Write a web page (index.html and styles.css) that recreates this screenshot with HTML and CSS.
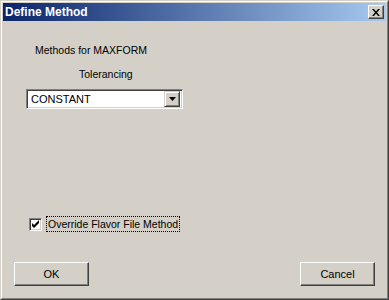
FILE: index.html
```html
<!DOCTYPE html>
<html lang="en">
<head>
<meta charset="UTF-8">
<title>Define Method</title>
<link rel="stylesheet" href="styles.css">
</head>
<body>
<div class="window">
  <div class="window-inner">
    <div class="titlebar">
      <span class="title">Define Method</span>
      <button class="close-btn" type="button">
        <svg width="8" height="7" viewBox="0 0 8 7">
          <path d="M0 0h2l2 2.5L6 0h2L5 3.5 8 7H6L4 4.5 2 7H0l3-3.5z" fill="#000"/>
        </svg>
      </button>
    </div>

    <div class="content">
      <div class="label label-methods">Methods for MAXFORM</div>
      <div class="label label-tol">Tolerancing</div>

      <div class="combo">
        <span class="combo-text">CONSTANT</span>
        <span class="combo-arrow">
          <svg width="7" height="4" viewBox="0 0 7 4"><path d="M0 0h7L3.5 4z" fill="#000"/></svg>
        </span>
      </div>

      <div class="check-row">
        <span class="checkbox">
          <svg width="9" height="9" viewBox="0 0 9 9">
            <path d="M1 3v3l2 2 5-5V0L3 5z" fill="#000"/>
          </svg>
        </span>
        <span class="check-label">Override Flavor File Method</span>
      </div>

      <div class="buttons">
        <button class="btn" type="button">OK</button>
        <button class="btn" type="button">Cancel</button>
      </div>
    </div>
  </div>
</div>
</body>
</html>
```

FILE: styles.css
```css
/* Win2000 style dialog */
body {
  margin: 0;
  padding: 0;
  background-color: #d4d0c8;
  font-family: "Liberation Sans", Arial, sans-serif;
  font-size: 10.5px;
  color: #000;
}
.window {
  width: 389px;
  height: 300px;
  box-sizing: border-box;
  border-top: 1px solid #d4d0c8;
  border-left: 1px solid #d4d0c8;
  border-right: 1px solid #404040;
  border-bottom: 1px solid #404040;
  background-color: #d4d0c8;
}
.window-inner {
  height: 100%;
  box-sizing: border-box;
  border-top: 1px solid #fff;
  border-left: 1px solid #fff;
  border-right: 1px solid #808080;
  border-bottom: 1px solid #808080;
  padding: 1px;
  display: flex;
  flex-direction: column;
}
.titlebar {
  height: 18px;
  display: flex;
  align-items: center;
  justify-content: space-between;
  background: linear-gradient(to right, #0a246a, #a6caf0);
  padding: 0 2px 0 2px;
}
.title {
  color: #fff;
  font-weight: bold;
  font-size: 12px;
  line-height: 18px;
}
.close-btn {
  width: 16px;
  height: 14px;
  padding: 0;
  margin: 0;
  box-sizing: border-box;
  background-color: #d4d0c8;
  border-top: 1px solid #fff;
  border-left: 1px solid #fff;
  border-right: 1px solid #404040;
  border-bottom: 1px solid #404040;
  box-shadow: inset -1px -1px 0 #808080;
  display: flex;
  align-items: center;
  justify-content: center;
}
.close-btn svg {
  display: block;
  margin-right: 1px;
}

.content {
  flex: 1;
  display: flex;
  flex-direction: column;
  padding: 0 11px;
}
.label {
  line-height: 13px;
}
.label-methods {
  margin: 23px 0 0 21px;
}
.label-tol {
  margin: 11px 0 0 65px;
}

/* Combo box */
.combo {
  width: 157px;
  height: 20px;
  margin: 8px 0 0 12px;
  box-sizing: border-box;
  background-color: #fff;
  border-top: 1px solid #808080;
  border-left: 1px solid #808080;
  border-right: 1px solid #fff;
  border-bottom: 1px solid #fff;
  box-shadow: inset 1px 1px 0 #404040, inset -1px -1px 0 #d4d0c8;
  display: flex;
  align-items: center;
  justify-content: space-between;
  padding: 2px;
}
.combo-text {
  padding-left: 2px;
  line-height: 14px;
  font-size: 11px;
}
.combo-arrow {
  width: 16px;
  height: 16px;
  box-sizing: border-box;
  background-color: #d4d0c8;
  border-top: 1px solid #d4d0c8;
  border-left: 1px solid #d4d0c8;
  border-right: 1px solid #404040;
  border-bottom: 1px solid #404040;
  box-shadow: inset 1px 1px 0 #fff, inset -1px -1px 0 #808080;
  display: flex;
  align-items: center;
  justify-content: center;
}
.combo-arrow svg {
  display: block;
}

/* Checkbox */
.check-row {
  display: flex;
  align-items: center;
  margin: 107px 0 0 15px;
}
.checkbox {
  width: 13px;
  height: 13px;
  box-sizing: border-box;
  background-color: #fff;
  border-top: 1px solid #808080;
  border-left: 1px solid #808080;
  border-right: 1px solid #fff;
  border-bottom: 1px solid #fff;
  box-shadow: inset 1px 1px 0 #404040, inset -1px -1px 0 #d4d0c8;
  display: flex;
  align-items: center;
  justify-content: center;
}
.checkbox svg {
  display: block;
}
.check-label {
  margin-left: 4px;
  padding: 0 1px;
  line-height: 14px;
  border: 1px dotted #000;
}

/* Buttons */
.buttons {
  display: flex;
  justify-content: space-between;
  margin-top: 30px;
}
.btn {
  width: 75px;
  height: 24px;
  box-sizing: border-box;
  padding: 0;
  font-family: "Liberation Sans", Arial, sans-serif;
  font-size: 11px;
  color: #000;
  background-color: #d4d0c8;
  border-top: 1px solid #fff;
  border-left: 1px solid #fff;
  border-right: 1px solid #404040;
  border-bottom: 1px solid #404040;
  box-shadow: inset -1px -1px 0 #808080;
}
```
